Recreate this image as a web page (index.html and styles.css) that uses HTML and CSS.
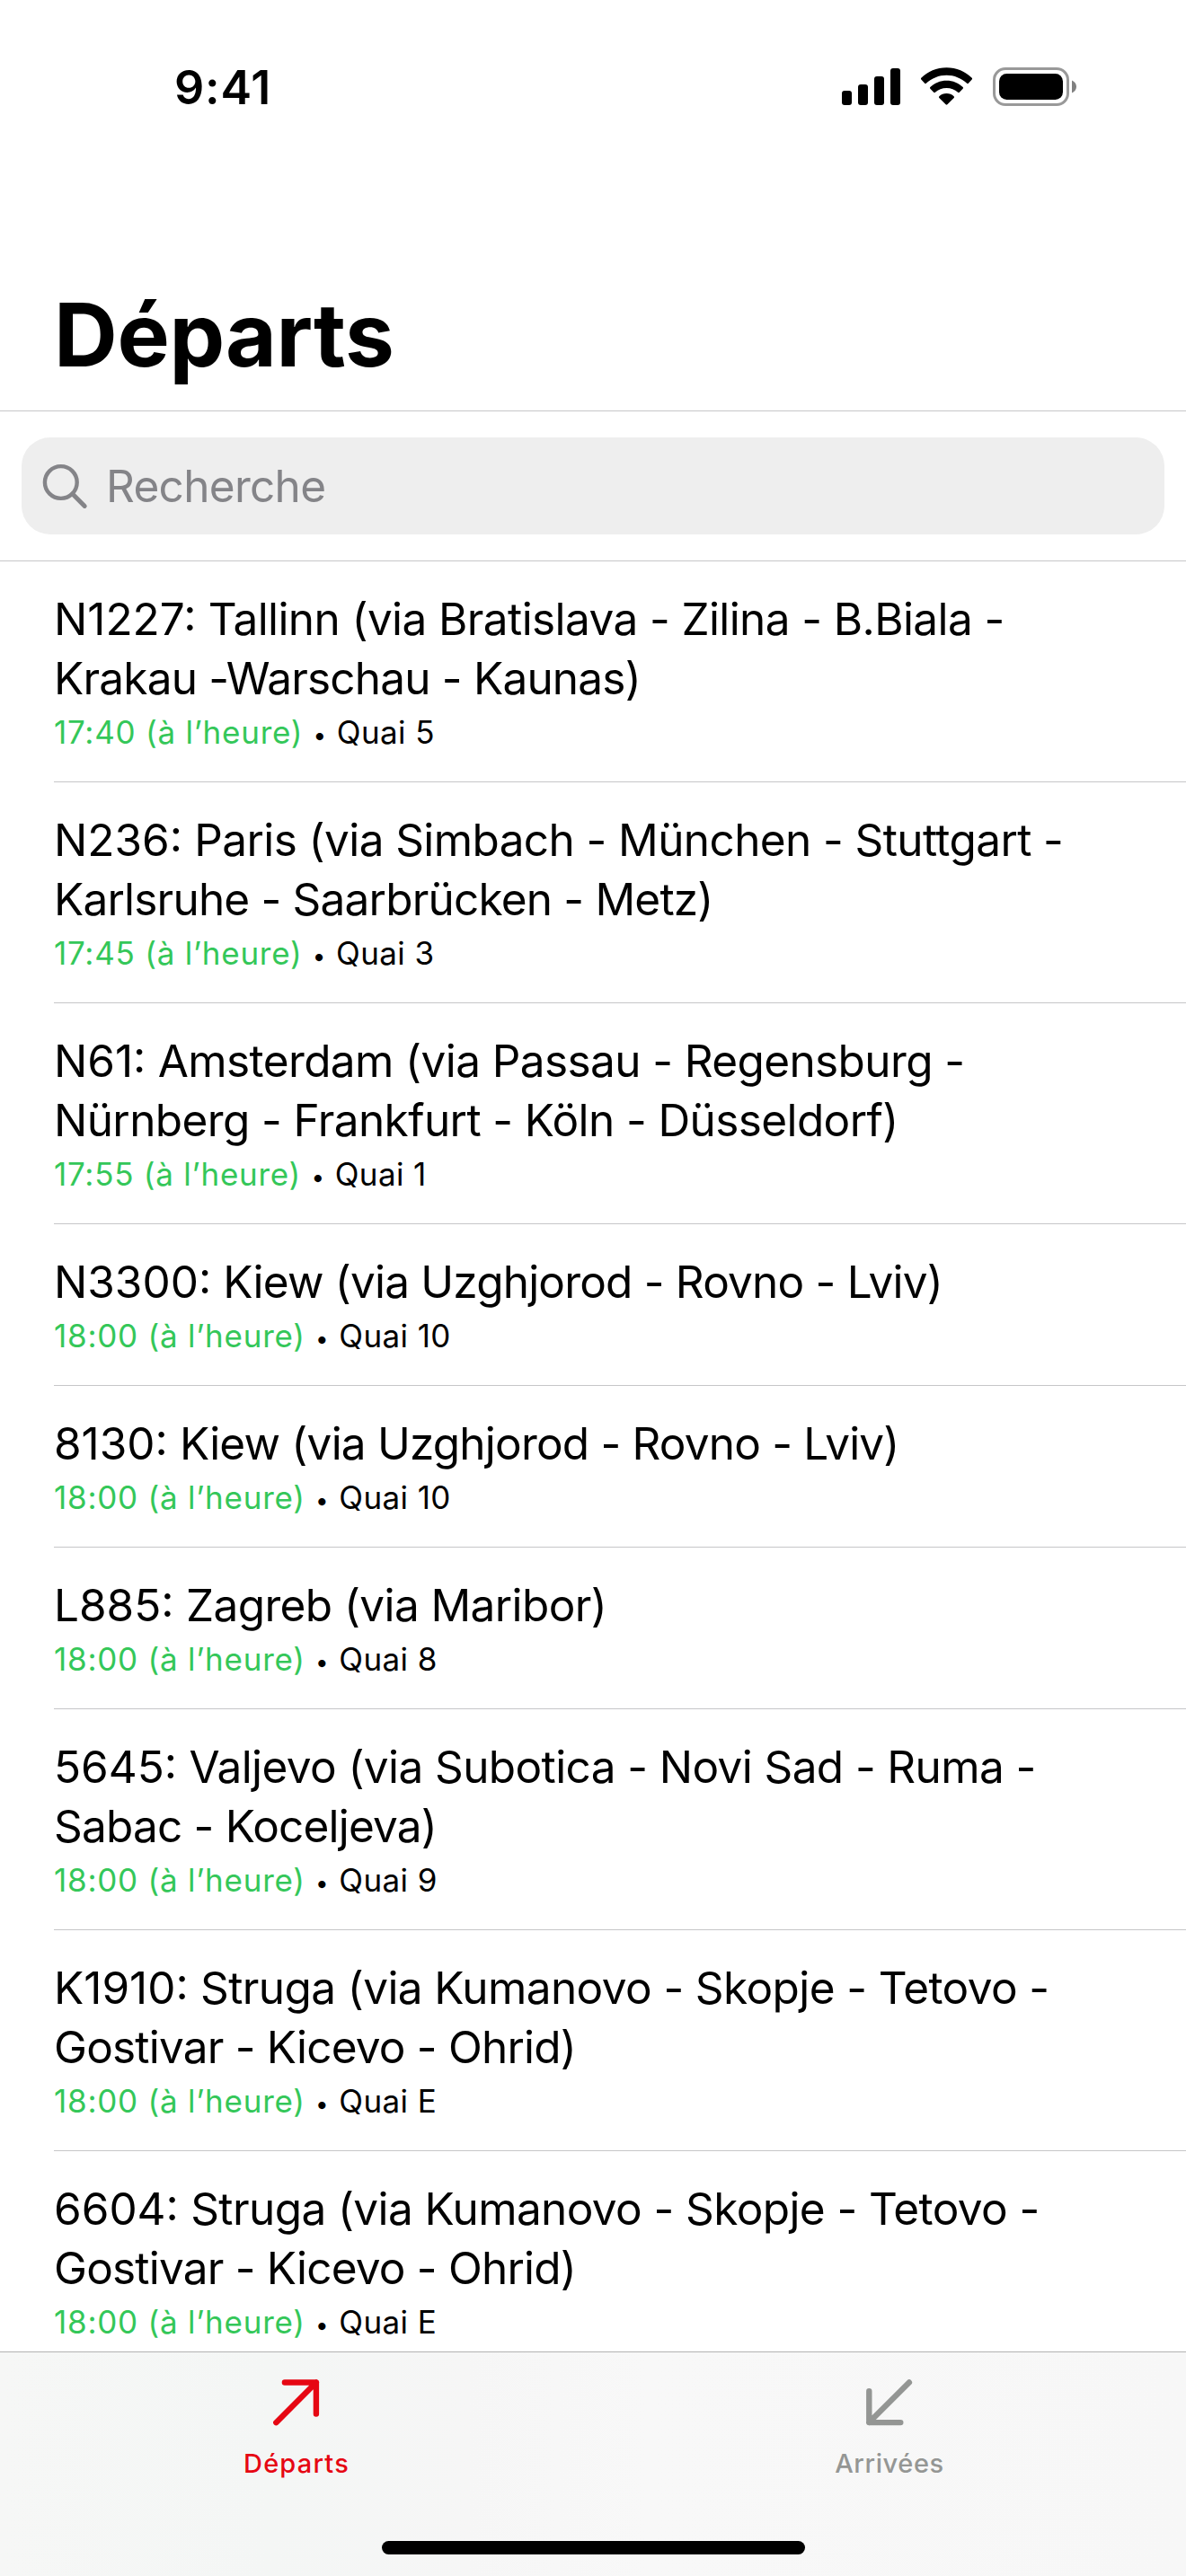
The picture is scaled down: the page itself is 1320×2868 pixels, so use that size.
FILE: index.html
```html
<!DOCTYPE html>
<html lang="fr">
<head>
<meta charset="utf-8">
<title>Départs</title>
<link rel="stylesheet" href="styles.css">
</head>
<body>
<div class="screen">
  <header class="header">
    <div class="status-bar">
      <span class="clock">9:41</span>
      <div class="status-icons">
        <svg class="signal" width="65" height="44" viewBox="0 0 65 44"><rect x="0" y="26" width="11" height="16" rx="3"/><rect x="18" y="19" width="11" height="23" rx="3"/><rect x="36" y="10" width="11" height="32" rx="3"/><rect x="54" y="1" width="11" height="41" rx="3"/></svg>
        <svg class="wifi" width="57" height="44" viewBox="0 0 57 44"><path d="M28.5.2C39.5.2 49.5 4.500 56.700 11.700Q57.500 12.600 56.700 13.500L52.800 17.800Q52 18.500 51.200 17.800C45 12 37 8.700 28.500 8.700S12 12 5.800 17.800Q5 18.500 4.200 17.800L.3 13.500Q-.5 12.600.3 11.700C7.500 4.500 17.500.2 28.500.2Z"/><path d="M28.500 14.700C35.500 14.700 42 17.300 46.700 22Q47.400 22.900 46.700 23.700L42.800 27.800Q42 28.600 41.100 27.800C37.700 24.800 33.300 23 28.500 23S19.300 24.800 15.900 27.800Q15 28.600 14.200 27.800L10.300 23.700Q9.600 22.900 10.300 22C15 17.300 21.500 14.700 28.500 14.700Z"/><path d="M28.500 29C31.700 29 34.500 30.200 36.700 32.200Q37.500 33.100 36.700 34L29.400 41.300Q28.500 42.200 27.600 41.300L20.300 34Q19.500 33.100 20.300 32.200C22.500 30.200 25.300 29 28.500 29Z"/></svg>
        <svg class="battery" width="94" height="44" viewBox="0 0 94 44"><rect x="1.500" y="1.500" width="82" height="40" rx="12.500" fill="none" stroke="#999" stroke-width="3"/><rect x="7" y="7" width="71" height="29" rx="8.500"/><path d="M88 14.500C91 15.700 93 18.300 93 21.500S91 27.300 88 28.500Z" fill="#808080"/></svg>
      </div>
    </div>
    <h1 class="page-title">Départs</h1>
  </header>

  <div class="search">
    <label class="search-field">
      <svg width="52" height="52" viewBox="0 0 52 52" fill="none" stroke="#848488" stroke-linecap="round"><circle cx="21.800" cy="22" r="17.900" stroke-width="4.400"/><path d="M34.800 35L48.200 48.400" stroke-width="5"/></svg>
      <span class="search-placeholder">Recherche</span>
    </label>
  </div>

  <ul class="departures">
    <li class="row"><p class="route"><span class="number">N1227:</span> Tallinn (via Bratislava - Zilina - B.Biala -<br><span class="tight">Krakau -Warschau - Kaunas)</span></p><p class="info"><span class="on-time">17:40 (à l’heure)</span> <span class="dot">•</span> Quai 5</p></li>
    <li class="row"><p class="route"><span class="number">N236:</span> Paris (via Simbach - München - Stuttgart -<br><span class="tight">Karlsruhe - Saarbrücken - Metz)</span></p><p class="info"><span class="on-time">17:45 (à l’heure)</span> <span class="dot">•</span> Quai 3</p></li>
    <li class="row"><p class="route"><span class="number">N61:</span> Amsterdam (via Passau - Regensburg -<br>Nürnberg - Frankfurt - Köln - Düsseldorf)</p><p class="info"><span class="on-time">17:55 (à l’heure)</span> <span class="dot">•</span> Quai 1</p></li>
    <li class="row"><p class="route tight"><span class="number">N3300:</span> Kiew (via Uzghjorod - Rovno - Lviv)</p><p class="info"><span class="on-time">18:00 (à l’heure)</span> <span class="dot">•</span> Quai 10</p></li>
    <li class="row"><p class="route tight"><span class="number">8130:</span> Kiew (via Uzghjorod - Rovno - Lviv)</p><p class="info"><span class="on-time">18:00 (à l’heure)</span> <span class="dot">•</span> Quai 10</p></li>
    <li class="row"><p class="route"><span class="number">L885:</span> Zagreb (via Maribor)</p><p class="info"><span class="on-time">18:00 (à l’heure)</span> <span class="dot">•</span> Quai 8</p></li>
    <li class="row"><p class="route"><span class="number">5645:</span> Valjevo (via Subotica - Novi Sad - Ruma -<br><span class="tight">Sabac - Koceljeva)</span></p><p class="info"><span class="on-time">18:00 (à l’heure)</span> <span class="dot">•</span> Quai 9</p></li>
    <li class="row"><p class="route"><span class="number">K1910:</span> Struga (via Kumanovo - Skopje - Tetovo -<br><span class="tight">Gostivar - Kicevo - Ohrid)</span></p><p class="info"><span class="on-time">18:00 (à l’heure)</span> <span class="dot">•</span> Quai E</p></li>
    <li class="row"><p class="route"><span class="number">6604:</span> Struga (via Kumanovo - Skopje - Tetovo -<br><span class="tight">Gostivar - Kicevo - Ohrid)</span></p><p class="info"><span class="on-time">18:00 (à l’heure)</span> <span class="dot">•</span> Quai E</p></li>
  </ul>

  <nav class="tab-bar">
    <div class="tabs">
      <a class="tab tab-active">
        <svg width="52" height="52" viewBox="0 0 52 52"><path d="M3.300 48.200L47.900 3.500M12.900 3.500H47.900V38.500"/></svg>
        <span>Départs</span>
      </a>
      <a class="tab">
        <svg width="52" height="52" viewBox="0 0 52 52"><path d="M47.900 3.500L3.300 48.100M3.300 13.300V48.100H38.300"/></svg>
        <span class="label-narrow">Arrivées</span>
      </a>
    </div>
    <div class="home-indicator"></div>
  </nav>
</div>
</body>
</html>
```
FILE: styles.css
```css
* {
  box-sizing: border-box;
  margin: 0;
  padding: 0;
}

body {
  background: #fff;
  color: #000;
  font-family: Inter, "Liberation Sans", sans-serif;
}

svg {
  display: block;
  flex: none;
}

.screen {
  display: flex;
  flex-direction: column;
  width: 1320px;
  height: 2868px;
  overflow: hidden;
}

/* Header */
.header {
  display: flex;
  flex: none;
  flex-direction: column;
  justify-content: space-between;
  height: 458px;
  padding: 68px 0 24px;
  border-bottom: 1px solid #c6c6c8;
}

.status-bar {
  display: flex;
  justify-content: space-between;
  padding: 0 121px 0 194px;
}

.clock {
  font-size: 52px;
  font-weight: 600;
  line-height: 60px;
  letter-spacing: 0.8px;
}

.status-icons {
  display: flex;
  padding-top: 7px;
}

.wifi {
  margin: 0 23px;
}

.page-title {
  padding-left: 60px;
  font-size: 98px;
  font-weight: 700;
  line-height: 120px;
  letter-spacing: -0.3px;
}

/* Search */
.search {
  flex: none;
  height: 167px;
  padding: 29px 24px;
  border-bottom: 1px solid #c6c6c8;
}

.search-field {
  display: flex;
  align-items: center;
  gap: 20px;
  height: 108px;
  padding-left: 22px;
  border-radius: 32px;
  background: #eee;
}

.search-placeholder {
  color: #848488;
  font-size: 49.5px;
  line-height: 66px;
  letter-spacing: -0.7px;
}

/* Departures */
.departures {
  flex: 1;
  min-height: 0;
  overflow: hidden;
  padding-left: 60px;
  list-style: none;
}

.row {
  padding: 31px 0;
  border-bottom: 1px solid #c6c6c8;
}

.route {
  font-size: 49.5px;
  line-height: 66px;
  letter-spacing: -0.6px;
  white-space: nowrap;
}

.tight {
  letter-spacing: -0.8px;
}

.number {
  letter-spacing: 0;
}

.info {
  margin-top: 3px;
  font-size: 35px;
  line-height: 48px;
  letter-spacing: 0.4px;
}

.on-time {
  color: #34c759;
  letter-spacing: 0.75px;
}

.dot {
  padding: 0 1px;
  font-size: 26px;
  line-height: 1;
}

/* Tab bar */
.tab-bar {
  display: flex;
  flex: none;
  flex-direction: column;
  align-items: center;
  justify-content: space-between;
  height: 250px;
  padding: 30px 0 24px;
  border-top: 1px solid #b2b2b2;
  background: linear-gradient(90deg, #f6f7f6 0, #f4f6f5 300px, #f6f6f6 520px, #f8f8f8 720px, #f7f7f7 100%);
}

.tabs {
  display: flex;
  width: 100%;
}

.tab {
  display: flex;
  flex: 1;
  flex-direction: column;
  align-items: center;
  gap: 22px;
  color: #949694;
  font-size: 29px;
  font-weight: 500;
  line-height: 40px;
  letter-spacing: 1.2px;
}

.tab path {
  fill: none;
  stroke: currentColor;
  stroke-width: 6.4;
  stroke-linecap: round;
  stroke-linejoin: round;
}

.tab-active {
  color: #e60713;
}

.label-narrow {
  letter-spacing: 0.6px;
}

.home-indicator {
  width: 471px;
  height: 15px;
  border-radius: 8px;
  background: #000;
}
```
